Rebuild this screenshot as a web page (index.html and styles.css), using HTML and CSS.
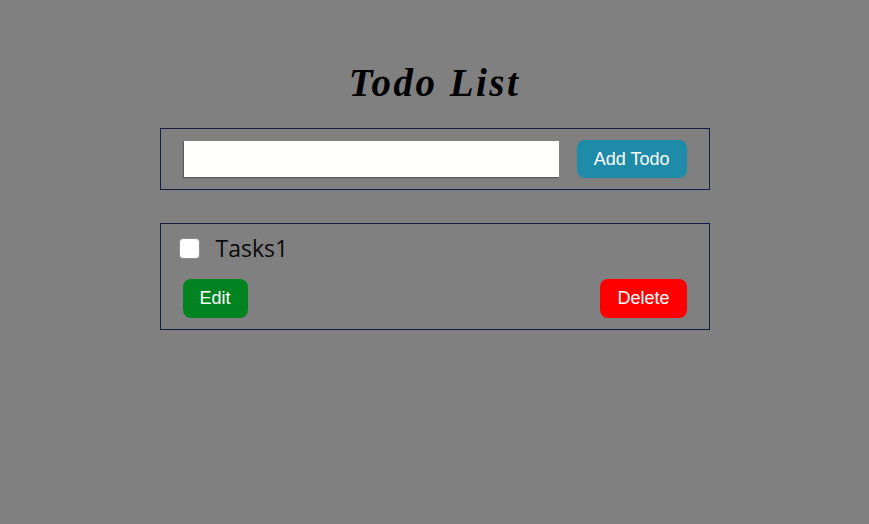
FILE: index.html
```html
<!DOCTYPE html>
<html lang="en">
<head>
<meta charset="utf-8">
<title>Todo List</title>
<link rel="stylesheet" href="styles.css">
</head>
<body>
  <main class="app">
    <h1 class="title">Todo List</h1>
    <form class="todo-form">
      <input class="todo-input" type="text" aria-label="New todo">
      <button class="btn btn-add" type="button">Add Todo</button>
    </form>
    <ul class="todo-list">
      <li class="todo-item">
        <label class="task-row">
          <input class="task-check" type="checkbox">
          <span class="task-text">Tasks1</span>
        </label>
        <div class="task-actions">
          <button class="btn btn-edit" type="button">Edit</button>
          <button class="btn btn-delete" type="button">Delete</button>
        </div>
      </li>
    </ul>
  </main>
</body>
</html>
```

FILE: styles.css
```css
html, body {
  margin: 0;
  padding: 0;
  background: #808080;
}

body {
  font-family: "Liberation Sans", Arial, sans-serif;
}

.app {
  width: 550px;
  margin: 0 auto;
  padding-top: 62px;
}

.title {
  margin: 0;
  text-align: center;
  font-family: "Liberation Serif", "Times New Roman", serif;
  font-style: italic;
  font-weight: bold;
  font-size: 39px;
  letter-spacing: 2.5px;
  line-height: 42px;
  color: #000;
}

.todo-form {
  margin: 24px 0 0;
  border: 1px solid #141b48;
  padding: 11px 22px 11px 23px;
  display: flex;
  align-items: center;
  gap: 18px;
}

.todo-input {
  flex: 1 1 auto;
  min-width: 0;
  height: 36px;
  box-sizing: border-box;
  border: none;
  background: #fffffd;
  box-shadow: -1px 1px 1px rgba(0, 0, 0, 0.3);
  margin: 0;
  padding: 0 6px;
  font-size: 16px;
}

.btn {
  border: none;
  border-radius: 8px;
  color: #fff;
  font-family: "Liberation Sans", Arial, sans-serif;
  font-size: 18px;
  padding: 0 17px;
  margin: 0;
  white-space: nowrap;
  flex-shrink: 0;
  cursor: pointer;
}

.btn-add {
  height: 38px;
  background: #1e8ba8;
}

.todo-list {
  list-style: none;
  margin: 33px 0 0;
  padding: 0;
}

.todo-item {
  border: 1px solid #141b48;
  padding: 8px 22px 11px 18px;
  display: flex;
  flex-direction: column;
  gap: 15px;
}

.task-row {
  height: 32px;
  display: flex;
  align-items: center;
  gap: 16px;
}

.task-check {
  appearance: none;
  -webkit-appearance: none;
  margin: 0;
  width: 21px;
  height: 21px;
  box-sizing: border-box;
  background: #fff;
  border: 1px solid #8c8c8c;
  border-radius: 4px;
}

.task-text {
  font-family: "Open Sans", "Noto Sans", sans-serif;
  font-size: 23px;
  line-height: 32px;
  color: #0a0a0a;
}

.task-actions {
  display: flex;
  justify-content: space-between;
  padding-left: 4px;
}

.btn-edit,
.btn-delete {
  height: 39px;
}

.btn-edit {
  background: #008320;
}

.btn-delete {
  background: #ff0000;
}
```
